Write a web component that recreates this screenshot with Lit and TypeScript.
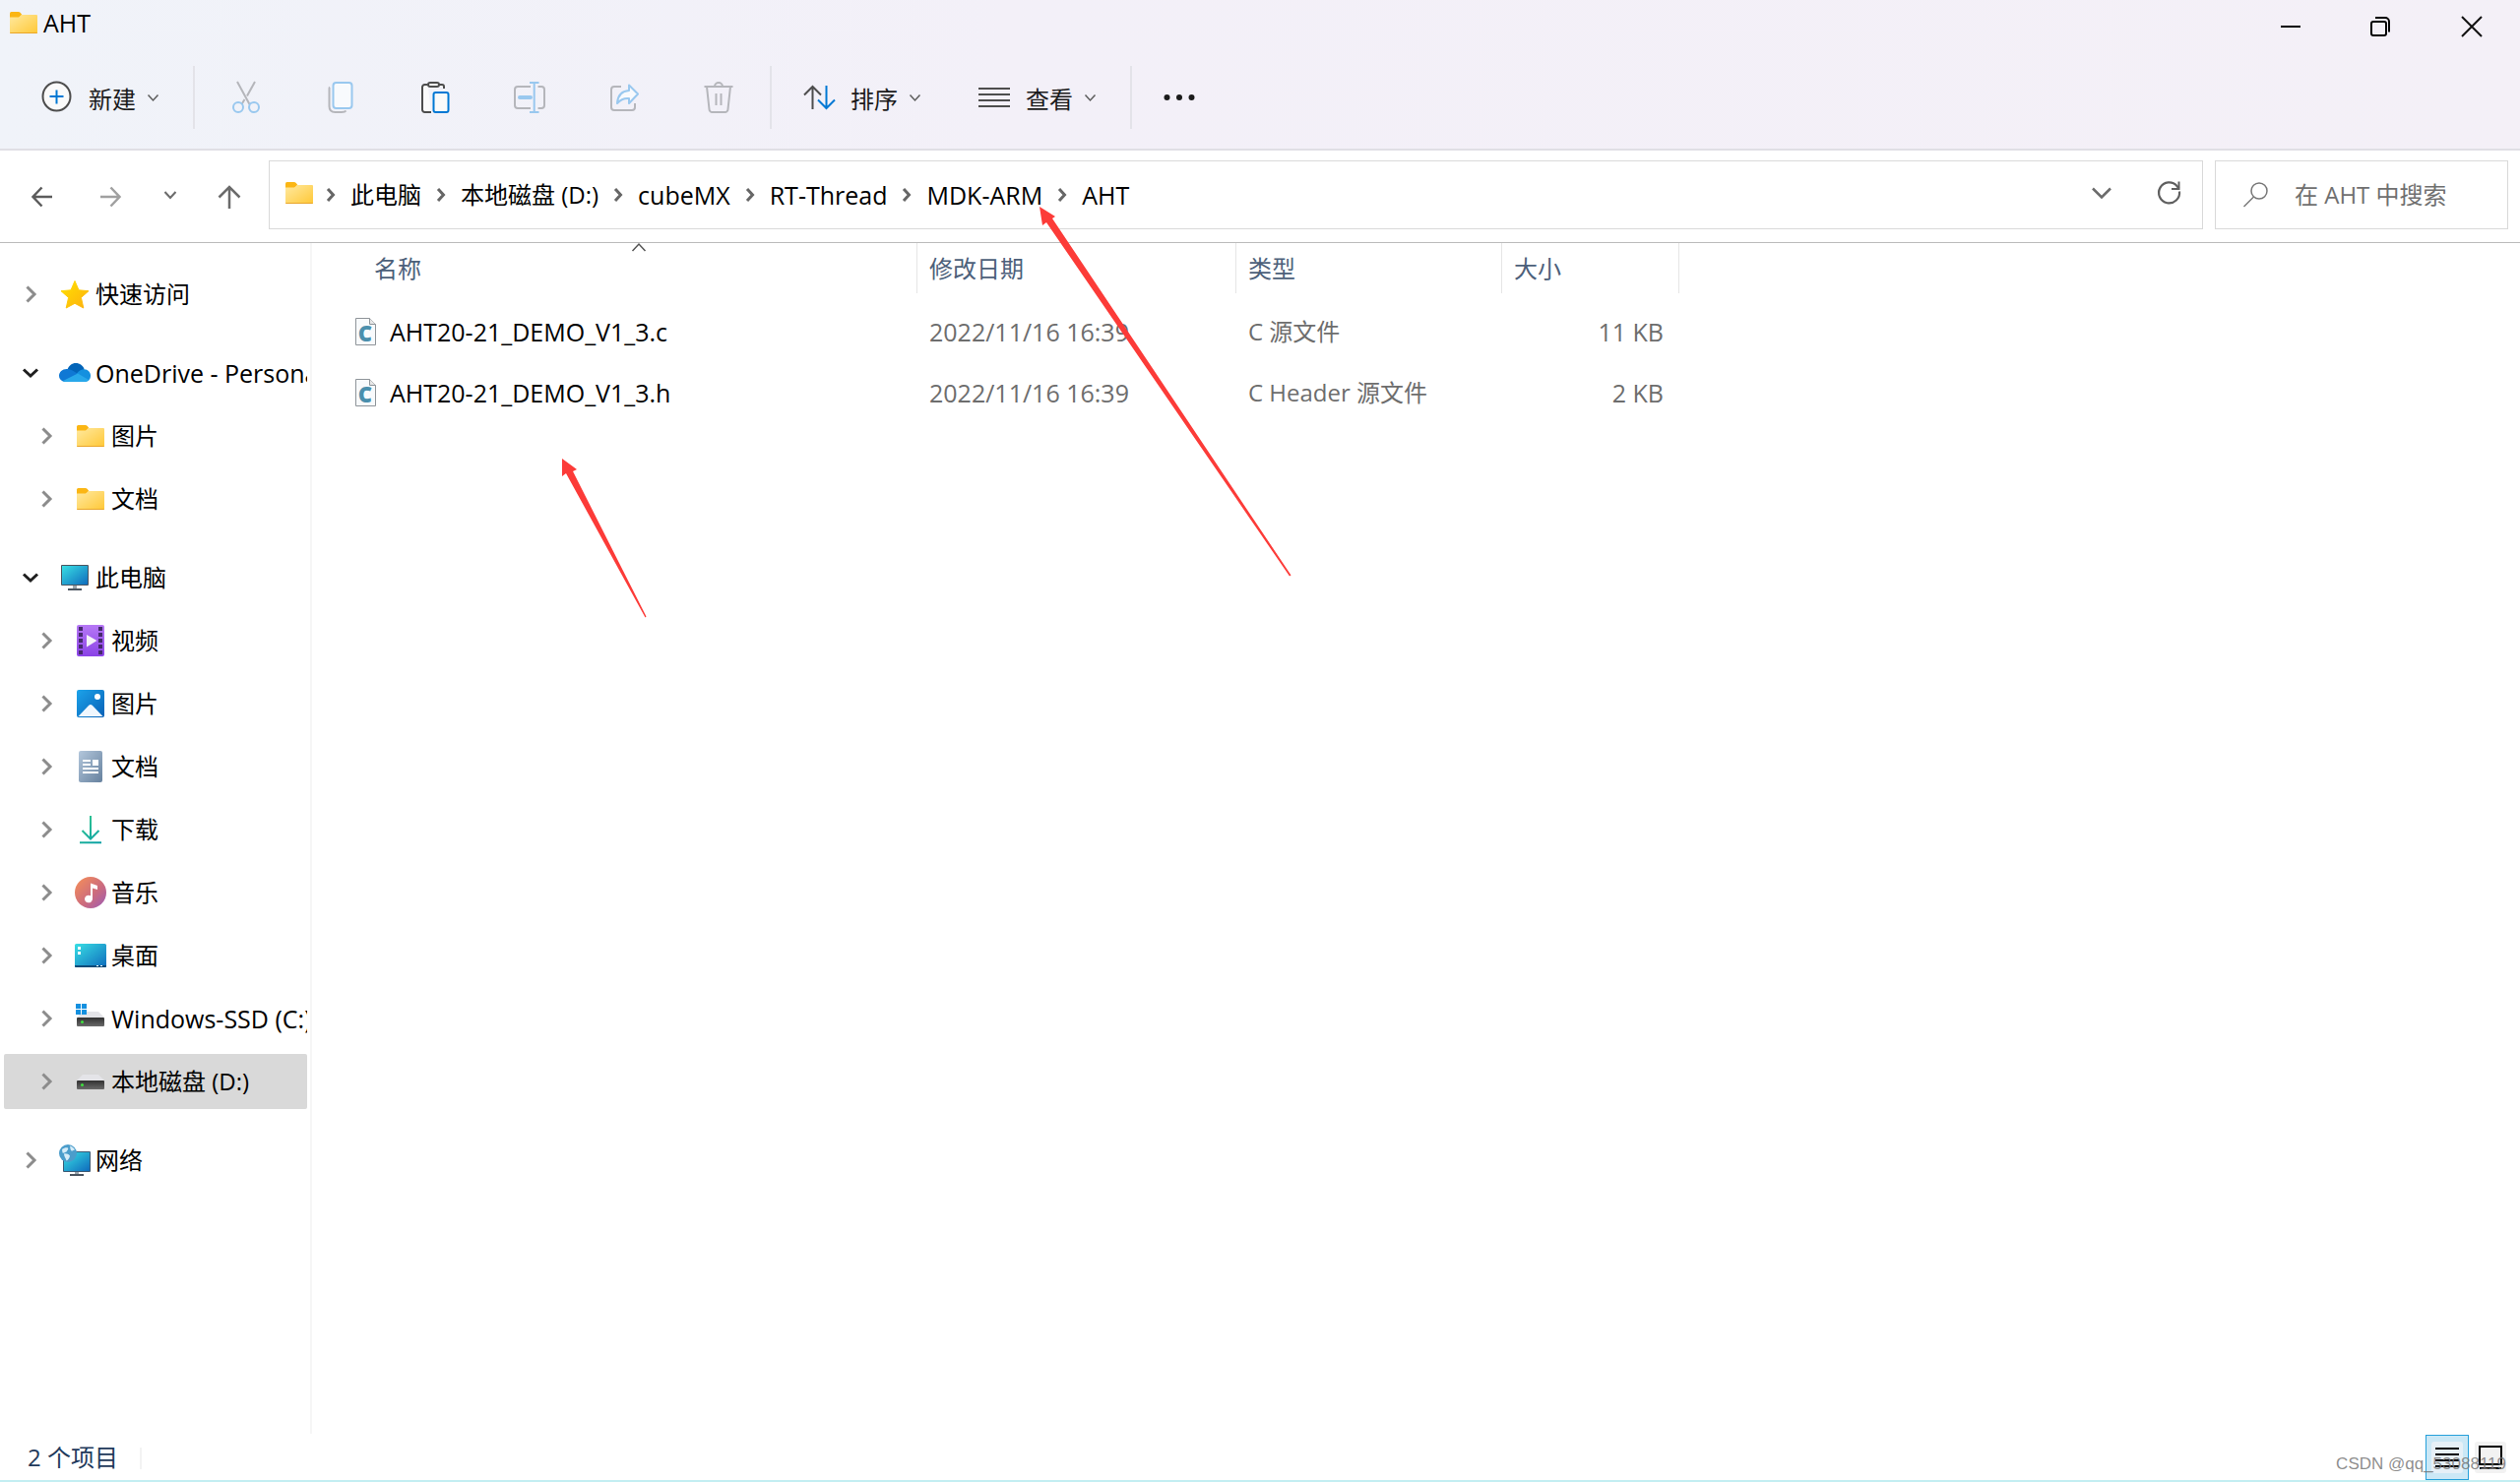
import { LitElement, html, css, svg, nothing } from "lit";
import type { TemplateResult } from "lit";
import { customElement, property, state } from "lit/decorators.js";
import { classMap } from "lit/directives/class-map.js";

const folder = svg`
  <defs>
    <linearGradient id="fo" x1="0" y1="0" x2="1" y2="1">
      <stop offset="0" stop-color="#ffe9a0"/><stop offset="1" stop-color="#ffc837"/>
    </linearGradient>
  </defs>
  <path d="M2 6.500a1.500 1.500 0 0 1 1.500-1.500h7c1 0 1.700.300 2.300 1l1.500 2-3 3H2z" fill="#fbb614"/>
  <path d="M2 10.500h8c1.200 0 1.800-.400 2.500-1.200.700-.900 1.200-1.300 2.300-1.300H29a1 1 0 0 1 1 1v17a1 1 0 0 1-1 1H3a1 1 0 0 1-1-1z" fill="url(#fo)"/>
  <path d="M2 26h28a1 1 0 0 1-1 1H3a1 1 0 0 1-1-1z" fill="#e9a528"/>`;

const screenGradient = svg`
  <defs>
    <linearGradient id="sc" x1="0" y1="0" x2="1" y2="1">
      <stop offset="0" stop-color="#38dfe4"/><stop offset="1" stop-color="#0f6cbd"/>
    </linearGradient>
  </defs>`;

const driveBody = svg`
  <defs>
    <linearGradient id="dr" x1="0" y1="0" x2="0" y2="1">
      <stop offset="0" stop-color="#303030"/><stop offset="1" stop-color="#6a6a6a"/>
    </linearGradient>
  </defs>
  <path d="M8 9h16l6 6H2z" fill="#e4e4e8"/>
  <rect x="2" y="15" width="28" height="9" rx="1" fill="url(#dr)"/>
  <circle cx="7.500" cy="19.500" r="1.500" fill="#3fe03f"/>`;

const icons: Record<string, TemplateResult> = {
  folder,
  star: svg`
    <defs><linearGradient id="st" x1="0" y1="0" x2="1" y2="1">
      <stop offset="0" stop-color="#ffe100"/><stop offset="1" stop-color="#fdb010"/></linearGradient></defs>
    <path d="M16 2.500l4 9.300 10 .900-7.600 6.700L24.800 30 16 25.300 7.200 30l2.400-10.600L2 12.700l10-.900z" fill="url(#st)" stroke="url(#st)" stroke-linejoin="round"/>`,
  cloud: svg`
    <path d="M8.500 12.500C10 8.500 13 6 17 6c4 0 7.500 2.500 8.700 6.500L18 18z" fill="#0364b8"/>
    <path d="M4 24.500C1.500 23.500 0 21.500 0 19c0-4 3.500-7.200 8-7 2.500 0 4 .500 6 1.800l8 4.700-16 6.500z" fill="#0f78d4"/>
    <path d="M18 16.500c2.500-3 4.500-4.300 7.700-4.300 3.500.200 6.300 3 6.300 6.600 0 2.500-1 4.200-2.500 5.200L20 19z" fill="#1490df"/>
    <path d="M3.500 24.300L19 16.500l11.500 6.700c-1.200 1.300-2.600 1.800-4.500 1.800H7c-1.300 0-2.300-.200-3.500-.700z" fill="#28a8ea"/>`,
  pc: svg`${screenGradient}
    <rect x="2" y="3" width="28" height="21" rx="1" fill="#4b5560"/>
    <rect x="3" y="4" width="26" height="19" fill="url(#sc)"/>
    <path d="M14 24h4v3h-4z" fill="#9aa3ab"/><rect x="9" y="27" width="14" height="2" fill="#4b5560"/>`,
  video: svg`
    <defs><linearGradient id="vi" x1="0" y1="0" x2="0" y2="1">
      <stop offset="0" stop-color="#b678f5"/><stop offset="1" stop-color="#8a42e6"/></linearGradient></defs>
    <rect x="2" y="0" width="28" height="32" rx="2" fill="url(#vi)"/>
    ${[2, 8, 14, 20, 26].map((y) => svg`
      <rect x="4" y=${y} width="4" height="4" fill="#462a6e"/><rect x="24" y=${y} width="4" height="4" fill="#462a6e"/>`)}
    <path d="M12 10l10.500 6L12 22.500z" fill="#f4f1f8"/>`,
  picture: svg`
    <defs><linearGradient id="pi" x1="0" y1="0" x2="1" y2="1">
      <stop offset="0" stop-color="#1ca3ea"/><stop offset="1" stop-color="#0860b6"/></linearGradient></defs>
    <rect x="2" y="2" width="28" height="28" rx="2" fill="url(#pi)"/>
    <circle cx="23" cy="9" r="3" fill="#fff"/>
    <path d="M3.500 29L14 18c1.300-1.400 2.700-1.400 4 0l10.500 11z" fill="#f0f7fe"/>`,
  document: svg`
    <defs><linearGradient id="do" x1="0" y1="0" x2="1" y2="1">
      <stop offset="0" stop-color="#b3c7dc"/><stop offset="1" stop-color="#66819e"/></linearGradient></defs>
    <rect x="4" y="0" width="24" height="32" rx="2" fill="url(#do)"/>
    <path d="M8 9h8v2H8zM8 13h8v2H8zM18 9h6v6h-6zM8 17h16v2H8zM8 21h16v2H8z" fill="#fff"/>`,
  download: svg`
    <defs><linearGradient id="dl" gradientUnits="userSpaceOnUse" x1="5" y1="2" x2="27" y2="29">
      <stop offset="0" stop-color="#35c98e"/><stop offset="1" stop-color="#0aa0a5"/></linearGradient></defs>
    <path d="M16 2v24M7.500 17l8.500 8.500 8.500-8.500M5 29.200h22" fill="none" stroke="url(#dl)" stroke-width="2"/>`,
  music: svg`
    <defs><linearGradient id="mu" x1="0" y1="0" x2="1" y2="1">
      <stop offset="0.100" stop-color="#f08a5d"/><stop offset="0.600" stop-color="#ca6a80"/><stop offset="1" stop-color="#9a5cb8"/></linearGradient></defs>
    <circle cx="16" cy="16" r="16" fill="url(#mu)"/>
    <path d="M16 6.500l7 2.500v4l-5-1.500v11a4 3.800 0 1 1-2-3.300z" fill="#fff"/>`,
  desktop: svg`${screenGradient}
    <rect x="0" y="4" width="32" height="24" rx="1.500" fill="url(#sc)"/>
    <path d="M0 26h32v1a1 1 0 0 1-1 1H1a1 1 0 0 1-1-1z" fill="#0b4a78"/>
    <path d="M3 7h3v3H3zM3 12h3v3H3zM22 26h2v1h-2zM26 26h2v1h-2z" fill="#fff"/>`,
  systemDrive: svg`${driveBody}
    <path d="M1 1h5v5H1zM7 1h5v5H7zM1 7h5v5H1zM7 7h5v5H7z" fill="#1490df"/>`,
  drive: driveBody,
  network: svg`${screenGradient}
    <rect x="4" y="7" width="28" height="21" rx="1" fill="#3d5a74"/>
    <rect x="5" y="8" width="26" height="19" fill="url(#sc)"/>
    <path d="M16 28h4v2h-4z" fill="#9aa3ab"/><rect x="11" y="30" width="14" height="2" fill="#4b5560"/>
    <circle cx="9" cy="9" r="9" fill="#4b9dcb"/>
    <path d="M3 5c2-1.500 4-2 6-1.500 1 1.500-1 2.500-1.500 4-1.500.500-2.500 1.500-4 1zM5 9.500c2-.500 4.500 0 6 2-.500 2.500-1.500 4-3.500 5-.500-2.500-2.500-4-2.500-7zM11 1.500c2 .500 4 2 5 4-1.500 0-2 1.500-3.500 1C11 5 11.500 3 11 1.500z" fill="#d5ecf8"/>`,
  cfile: svg`
    <path d="M6.500 2.500h14l6 6v21h-20z" fill="#f8fafc" stroke="#8e9499"/>
    <path d="M20.500 2.500v6h6" fill="#e8e8e8" stroke="#8e9499"/>
    <text class="glyph" x="16" y="26" text-anchor="middle">C</text>`,
  plus: svg`
    <ellipse cx="15.500" cy="15" rx="14" ry="14.500" fill="#fafafa" stroke="#4d4d4d" stroke-width="2"/>
    <path d="M15.500 8.500v14M8.500 15h14" stroke="#0078d4" stroke-width="2"/>`,
  cut: svg`
    <path d="M7 0l12.500 23M25 0l-8 14.500M14.500 18l-3 5" stroke="#b5b6bb" stroke-width="2"/>
    <g fill="none" stroke="#99c8ef" stroke-width="2"><circle cx="8" cy="26" r="5"/><circle cx="24" cy="26" r="5"/></g>`,
  copy: svg`
    <path d="M5 5.500C4.300 6 4.500 7 4.500 8v17c0 4 2 6 6 6h6.500c2 0 3.500 0 4.500-1.500" fill="none" stroke="#b5b6bb" stroke-width="2"/>
    <rect x="8.500" y="1" width="19" height="26" rx="3" fill="#f8fafd" stroke="#99c8ef" stroke-width="2"/>`,
  paste: svg`
    <path d="M8.500 3H5.500A2.500 2.500 0 0 0 3 5.500v23A2.500 2.500 0 0 0 5.500 31H12M20 3h3a2 2 0 0 1 2 2v2" fill="#fafafa" stroke="#4d4d4d" stroke-width="2"/>
    <rect x="9" y="1" width="11" height="4" rx="2" fill="#fafafa" stroke="#4d4d4d" stroke-width="2"/>
    <rect x="14.500" y="11" width="15" height="20" rx="2" fill="#fafafa" stroke="#0078d4" stroke-width="2"/>`,
  rename: svg`
    <path d="M17 5H4a3 3 0 0 0-3 3v16a3 3 0 0 0 3 3h13M24.500 5H28a3 3 0 0 1 3 3v16a3 3 0 0 1-3 3h-3.500" fill="none" stroke="#b5b6bb" stroke-width="2"/>
    <path d="M20.700 1v30M16 1h9.500M16 31h9.500" stroke="#99c8ef" stroke-width="2"/>
    <path d="M6 16h11" stroke="#99c8ef" stroke-width="4" stroke-linecap="round"/>`,
  share: svg`
    <path d="M13 5H6a3 3 0 0 0-3 3v18a3 3 0 0 0 3 3h18a3 3 0 0 0 3-3v-4" fill="none" stroke="#b5b6bb" stroke-width="2"/>
    <path d="M21 3.500l9 9-9 9.500v-5c-5-.500-8.500 1-12 5 .500-8 5-12.500 12-13z" fill="#f8fafd" stroke="#99c8ef" stroke-width="2" stroke-linejoin="round"/>`,
  trash: svg`
    <path d="M1.500 5h29M12 5a4 4 0 0 1 8 0M4 5l2.500 23a3 3 0 0 0 3 3h13a3 3 0 0 0 3-3L28 5M13.500 12v12M18.500 12v12" fill="none" stroke="#b5b6bb" stroke-width="2"/>`,
  sort: svg`
    <path d="M9.500 28V5M1 13.500L9.500 5l8.500 8.500" fill="none" stroke="#4d4d4d" stroke-width="2"/>
    <path d="M23.500 4v23M15 18.500l8.500 8.500 8.500-8.500" fill="none" stroke="#0078d4" stroke-width="2"/>`,
  list: svg`<path d="M0 7h32M0 13h32M0 19h32M0 25h32" stroke="#4d4d4d" stroke-width="2"/>`,
  more: svg`<g fill="#1b1b1b"><circle cx="3.500" cy="16" r="3"/><circle cx="16" cy="16" r="3"/><circle cx="28.500" cy="16" r="3"/></g>`,
  minimize: svg`<path d="M6 16h20" stroke="#000" stroke-width="2"/>`,
  restore: svg`
    <rect x="6" y="11" width="15" height="14" rx="2" fill="none" stroke="#000" stroke-width="2"/>
    <path d="M10 7h10a4 4 0 0 1 4 4v10.500" fill="none" stroke="#000" stroke-width="2"/>`,
  close: svg`<path d="M6 6l20 20M26 6L6 26" stroke="#111" stroke-width="2"/>`,
  back: svg`<path d="M26 16H7M15.500 6.500L6.500 16l9 9.500" fill="none" stroke="#5c5c5c" stroke-width="2.500"/>`,
  forward: svg`<path d="M7 16h19M17.500 6.500l9 9.500-9 9.500" fill="none" stroke="#a0a0a0" stroke-width="2.500"/>`,
  up: svg`<path d="M16 28V6M5.500 16.500L16 6l10.500 10.500" fill="none" stroke="#6b6b6b" stroke-width="2.500"/>`,
  recent: svg`<path d="M10.500 11l5.500 6 5.500-6" fill="none" stroke="#6b6b6b" stroke-width="2"/>`,
  expand: svg`<path d="M7 11.500l9 9 9-9" fill="none" stroke="#6b6b6b" stroke-width="2.500"/>`,
  refresh: svg`
    <path d="M27 14.500a10.500 10.500 0 1 1-2.500-5.500l2 2.500" fill="none" stroke="#5f5f5f" stroke-width="2.200"/>
    <path d="M26.500 4.500v7.500h-7.500" fill="none" stroke="#5f5f5f" stroke-width="2"/>`,
  search: svg`<circle cx="20" cy="12" r="8" fill="none" stroke="#777" stroke-width="1.500"/><path d="M14.500 18L4.500 28" stroke="#777" stroke-width="1.500"/>`,
  chevronDown: svg`<path d="M10.500 13.500l5 5.500 5-5.500" fill="none" stroke="#5c5c5c" stroke-width="1.500"/>`,
  crumb: svg`<path d="M13 10l5.500 6-5.500 6" fill="none" stroke="#666" stroke-width="3"/>`,
  treeClosed: svg`<path d="M11.500 8.500l7.500 7.500-7.500 7.500" fill="none" stroke="#8c8c8c" stroke-width="3"/>`,
  treeOpen: svg`<path d="M8 12.500l7 6.500 7-6.500" fill="none" stroke="#1f1f1f" stroke-width="3"/>`,
  caret: svg`<path d="M9.500 20l6.500-7 6.500 7" fill="none" stroke="#555" stroke-width="1.500"/>`,
  details: svg`<rect width="32" height="32" rx="3" fill="#e6f0f7"/><path d="M4 7h24M4 13h24M4 19h24M4 25h24" stroke="#000" stroke-width="2"/>`,
  tiles: svg`<rect width="32" height="32" rx="3" fill="#f2f2f2"/><rect x="5" y="5" width="22" height="18" fill="none" stroke="#000" stroke-width="2"/><path d="M5 27h22" stroke="#000" stroke-width="2"/>`,
};

@customElement("ui-icon")
export class UiIcon extends LitElement {
  static styles = css`
    :host { display: inline-flex; flex: none; width: 32px; height: 32px; }
    .art { display: block; width: 100%; height: 100%; overflow: visible; }
    .glyph { font: 800 22px "Open Sans", sans-serif; fill: #4a8fad; }
  `;
  @property() name = "";
  render() {
    return html`<svg class="art" viewBox="0 0 32 32" aria-hidden="true">${icons[this.name] ?? nothing}</svg>`;
  }
}

interface TreeNode {
  label: string;
  icon: string;
  open?: boolean;
  children?: TreeNode[];
}

const tree: TreeNode[] = [
  { label: "快速访问", icon: "star" },
  {
    label: "OneDrive - Personal", icon: "cloud", open: true,
    children: [{ label: "图片", icon: "folder" }, { label: "文档", icon: "folder" }],
  },
  {
    label: "此电脑", icon: "pc", open: true,
    children: [
      { label: "视频", icon: "video" },
      { label: "图片", icon: "picture" },
      { label: "文档", icon: "document" },
      { label: "下载", icon: "download" },
      { label: "音乐", icon: "music" },
      { label: "桌面", icon: "desktop" },
      { label: "Windows-SSD (C:)", icon: "systemDrive" },
      { label: "本地磁盘 (D:)", icon: "drive" },
    ],
  },
  { label: "网络", icon: "network" },
];

const crumbs = ["此电脑", "本地磁盘 (D:)", "cubeMX", "RT-Thread", "MDK-ARM", "AHT"];

const files = [
  { name: "AHT20-21_DEMO_V1_3.c", date: "2022/11/16 16:39", type: "C 源文件", size: "11 KB" },
  { name: "AHT20-21_DEMO_V1_3.h", date: "2022/11/16 16:39", type: "C Header 源文件", size: "2 KB" },
];

const actions = [
  { icon: "cut", label: "剪切", enabled: false },
  { icon: "copy", label: "复制", enabled: false },
  { icon: "paste", label: "粘贴", enabled: true },
  { icon: "rename", label: "重命名", enabled: false },
  { icon: "share", label: "共享", enabled: false },
  { icon: "trash", label: "删除", enabled: false },
];

@customElement("app-root")
export class AppRoot extends LitElement {
  static styles = css`
    :host {
      position: relative;
      display: flex;
      flex-direction: column;
      min-height: 100vh;
      background: #fff;
      color: #000;
      font: 24px/32px "Open Sans", "Noto Sans CJK SC", sans-serif;
    }
    * { box-sizing: border-box; }
    button {
      display: flex; align-items: center; flex: none;
      margin: 0; padding: 0; border: 0; background: none;
      font: inherit; color: inherit; white-space: nowrap; text-align: left;
    }
    ul, ol { list-style: none; margin: 0; padding: 0; }
    .latin { font-size: 25px; }

    .chrome { background: linear-gradient(90deg, #f0f3f9, #f3f0f8 40%, #f4f0f7); border-bottom: 2px solid #e0dfe5; }
    .titlebar { display: flex; justify-content: space-between; height: 54px; padding: 0 3px 0 8px; }
    .title { display: flex; align-items: center; gap: 4px; margin: 0; padding-bottom: 8px; font-weight: 400; }
    .controls { display: flex; }
    .control { width: 92px; justify-content: center; }

    .toolbar { display: flex; align-items: center; height: 97px; padding: 0 0 7px 10px; }
    .group { display: flex; align-items: center; gap: 56px; height: 64px; padding: 0 32px; border-right: 2px solid #e3e3e9; }
    .group.tight { gap: 0; padding: 0 4px; }
    .group.last { border: 0; }
    .menu { gap: 16px; color: #1b1b1b; }
    .menu .text { padding-top: 4px; }
    .menu .arrow { width: 32px; margin: 0 -8px 0 -14px; }
    .action { width: 96px; height: 64px; justify-content: center; }

    .navbar { display: flex; align-items: center; gap: 28px; padding: 10px 12px 13px 23px; border-bottom: 1px solid #bbb; }
    .nav { justify-content: center; width: 40px; height: 40px; padding-top: 4px; }
    .nav.small { width: 28px; }
    .nav.up { width: 36px; }
    .places { display: flex; flex: 1; gap: 12px; min-width: 0; margin-left: -6px; }
    .address, .search { display: flex; align-items: center; height: 70px; border: 1px solid #d9d9d9; }
    .address { flex: 1; min-width: 0; padding: 0 18px 4px 14px; }
    .crumbs { display: flex; flex: 1; padding-top: 4px; margin-left: -4px; }
    .crumbs li { display: flex; align-items: center; }
    .crumbs ui-icon { margin: 0 4px; }
    .crumbs a { color: inherit; text-decoration: none; }
    .address .tool { justify-content: center; width: 68px; }
    .address .tool:last-child { margin-right: -18px; }
    .search { width: 298px; padding: 0 16px 0 24px; gap: 24px; }
    .field { flex: 1; width: 100%; min-width: 0; margin: 0; padding: 0; border: 0; outline: 0; background: none; font: inherit; color: #333; }
    .field::placeholder { color: #707070; opacity: 1; }

    .body { display: flex; flex: 1; }
    .sidebar { flex: none; width: 317px; padding: 20px 3px 20px 4px; border-right: 2px solid #f6f6f6; }
    .branch, .leaves { display: flex; flex-direction: column; gap: 8px; }
    .branch { padding: 4px 0; }
    .branch + .branch { margin-top: 16px; }
    .row { width: 100%; height: 56px; padding-left: 12px; border-radius: 2px; overflow: hidden; }
    .row.child { padding-left: 28px; }
    .row.selected { background: #d9d9d9; }
    .row .twist { margin-right: 12px; }
    .row .kind { margin-right: 5px; }

    .content { flex: 1; min-width: 0; }
    .files { table-layout: fixed; width: 1389px; border-spacing: 0; }
    .c-name { width: 615px; } .c-date { width: 324px; } .c-type { width: 270px; } .c-size { width: 180px; }
    th { position: relative; height: 60px; padding: 0; vertical-align: top; font-weight: 400; color: #4c607a; }
    th button { width: 100%; height: 51px; padding-left: 12px; border-right: 1px solid #e5e5e5; }
    th:first-child button { padding-left: 63px; }
    .caret { position: absolute; top: -12px; left: 50%; margin-left: 8px; }
    td { height: 62px; padding: 0 16px 2px 12px; color: #6d6d6d; white-space: nowrap; }
    td:first-child { padding-left: 38px; color: #000; }
    td:last-child { text-align: right; }
    .file { display: flex; align-items: center; gap: 9px; }

    .status { display: flex; align-items: center; justify-content: space-between; height: 49px; padding: 0 14px 0 28px; border-bottom: 2px solid #c3eef2; color: #1e395b; }
    .count { padding-right: 22px; }
    .count::after { content: ""; display: inline-block; height: 22px; margin: 0 0 -3px 22px; border-right: 2px solid #f3f3f3; }
    .views { display: flex; align-items: center; gap: 6px; }
    .view { justify-content: center; height: 46px; }
    .view.on { width: 44px; background: #cbe8f6; border: 1px solid #26a0da; }
    .mark { position: absolute; right: 14px; bottom: 8px; font: 17px/20px "Liberation Sans", sans-serif; color: rgba(120, 120, 120, 0.85); }
    .arrows { position: absolute; top: 0; left: 0; width: 1400px; height: 700px; pointer-events: none; }
  `;

  @state() private selected = "本地磁盘 (D:)";

  private isLatin(text: string) {
    return /^[\x20-\x7e]+$/.test(text);
  }

  private row(node: TreeNode, child: boolean) {
    return html`
      <button
        class=${classMap({ row: true, child, selected: node.label === this.selected, latin: this.isLatin(node.label) })}
        @click=${() => (this.selected = node.label)}
      >
        <ui-icon class="twist" name=${node.open ? "treeOpen" : "treeClosed"}></ui-icon>
        <ui-icon class="kind" name=${node.icon}></ui-icon>${node.label}
      </button>`;
  }

  private menu(icon: string, label: string) {
    return html`
      <button class="menu">
        <ui-icon name=${icon}></ui-icon><span class="text">${label}</span><ui-icon class="arrow" name="chevronDown"></ui-icon>
      </button>`;
  }

  render() {
    return html`
      <header class="chrome">
        <div class="titlebar">
          <h1 class="title latin"><ui-icon name="folder"></ui-icon>AHT</h1>
          <div class="controls">
            <button class="control" aria-label="最小化"><ui-icon name="minimize"></ui-icon></button>
            <button class="control" aria-label="还原"><ui-icon name="restore"></ui-icon></button>
            <button class="control" aria-label="关闭"><ui-icon name="close"></ui-icon></button>
          </div>
        </div>
        <div class="toolbar">
          <div class="group">${this.menu("plus", "新建")}</div>
          <div class="group tight">
            ${actions.map((a) => html`
              <button class="action" aria-label=${a.label} ?disabled=${!a.enabled}><ui-icon name=${a.icon}></ui-icon></button>`)}
          </div>
          <div class="group">${this.menu("sort", "排序")}${this.menu("list", "查看")}</div>
          <div class="group last">
            <button aria-label="更多"><ui-icon name="more"></ui-icon></button>
          </div>
        </div>
      </header>

      <nav class="navbar">
        <button class="nav" aria-label="后退"><ui-icon name="back"></ui-icon></button>
        <button class="nav" aria-label="前进" disabled><ui-icon name="forward"></ui-icon></button>
        <button class="nav small" aria-label="最近位置"><ui-icon name="recent"></ui-icon></button>
        <button class="nav up" aria-label="上移"><ui-icon name="up"></ui-icon></button>
        <div class="places">
          <div class="address">
            <ui-icon name="folder"></ui-icon>
            <ol class="crumbs">
              ${crumbs.map((c) => html`
                <li><ui-icon name="crumb"></ui-icon><a href="#" class=${classMap({ latin: this.isLatin(c) })}>${c}</a></li>`)}
            </ol>
            <button class="tool" aria-label="展开"><ui-icon name="expand"></ui-icon></button>
            <button class="tool" aria-label="刷新"><ui-icon name="refresh"></ui-icon></button>
          </div>
          <label class="search">
            <ui-icon name="search"></ui-icon>
            <input class="field" type="text" aria-label="搜索" placeholder="在 AHT 中搜索" />
          </label>
        </div>
      </nav>

      <div class="body">
        <aside class="sidebar">
          <ul>
            ${tree.map((node) => html`
              <li class="branch">
                ${this.row(node, false)}
                ${node.children
                  ? html`<ul class="leaves">${node.children.map((c) => html`<li>${this.row(c, true)}</li>`)}</ul>`
                  : nothing}
              </li>`)}
          </ul>
        </aside>
        <main class="content">
          <table class="files">
            <colgroup><col class="c-name" /><col class="c-date" /><col class="c-type" /><col class="c-size" /></colgroup>
            <thead>
              <tr>
                <th aria-sort="ascending"><button>名称</button><ui-icon class="caret" name="caret"></ui-icon></th>
                <th><button>修改日期</button></th>
                <th><button>类型</button></th>
                <th><button>大小</button></th>
              </tr>
            </thead>
            <tbody>
              ${files.map((f) => html`
                <tr>
                  <td><span class="file latin"><ui-icon name="cfile"></ui-icon>${f.name}</span></td>
                  <td class="latin">${f.date}</td>
                  <td>${f.type}</td>
                  <td class="latin">${f.size}</td>
                </tr>`)}
            </tbody>
          </table>
        </main>
      </div>

      <footer class="status">
        <span class="count">2 个项目</span>
        <div class="views">
          <button class="view on" aria-label="详细信息"><ui-icon name="details"></ui-icon></button>
          <button class="view" aria-label="大缩略图"><ui-icon name="tiles"></ui-icon></button>
        </div>
      </footer>
      <span class="mark">CSDN @qq_53088119</span>

      <svg class="arrows" viewBox="0 0 1400 700" aria-hidden="true">
        <path d="M1056 210L1072 220L1069 222L1311.500 584.500L1310 585.500L1063 226L1059 229Z" fill="#fc3b38"/>
        <path d="M571 466L586 477L582 479L656.500 626.500L655.500 627.500L575 481L571 484Z" fill="#fc3b38"/>
      </svg>
    `;
  }
}
